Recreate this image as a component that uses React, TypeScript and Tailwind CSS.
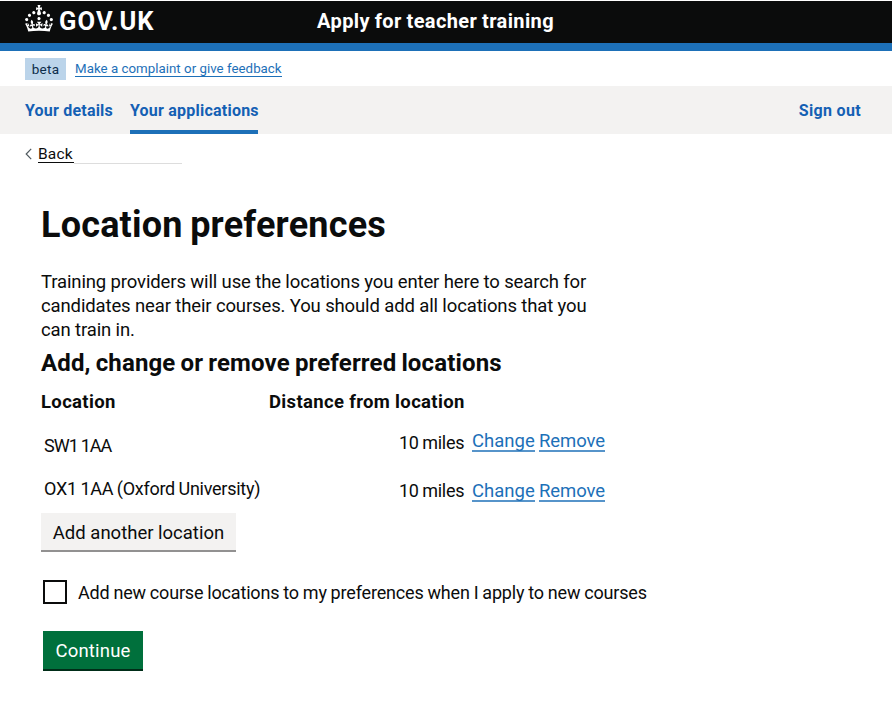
const crown =
  'M22.6 10.4c-1 .4-2-.1-2.4-1-.4-.9.1-2 1-2.4.9-.4 2 .1 2.4 1s-.1 2-1 2.4m-5.9 6.7c-.9.4-2-.1-2.4-1-.4-.9.1-2 1-2.4.9-.4 2 .1 2.4 1s-.1 2-1 2.4m10.8-3.7c-1 .4-2-.1-2.4-1-.4-.9.1-2 1-2.4.9-.4 2 .1 2.4 1s0 2-1 2.4m3.3 4.8c-1 .4-2-.1-2.4-1-.4-.9.1-2 1-2.4.9-.4 2 .1 2.4 1s-.1 2-1 2.4M17 4.7l2.3 1.2V2.5l-2.3.7-.2-.2.9-3h-3.4l.9 3-.2.2c-.1.1-2.3-.7-2.3-.7v3.4L15 4.7c.1.1.1.2.2.2l-1.3 4c-.1.2-.1.4-.1.6 0 1.1.8 2 1.9 2.2h.7c1-.2 1.9-1.1 1.9-2.1 0-.2 0-.4-.1-.6l-1.3-4c-.1-.2 0-.2.1-.3m-7.6 5.7c.9.4 2-.1 2.4-1 .4-.9-.1-2-1-2.4-.9-.4-2 .1-2.4 1s0 2 1 2.4m-5 3c.9.4 2-.1 2.4-1 .4-.9-.1-2-1-2.4-.9-.4-2 .1-2.4 1s.1 2 1 2.4m-3.2 4.8c.9.4 2-.1 2.4-1 .4-.9-.1-2-1-2.4-.9-.4-2 .1-2.4 1s0 2 1 2.4m14.8 11c4.4 0 8.6.3 12.3.8 1.1-4.5 2.4-7 3.7-8.8l-2.5-.9c.2 1.3.3 1.9 0 2.7-.4-.4-.8-1.1-1.1-2.3l-1.2 4c.7-.5 1.3-.8 2-.9-1.1 2.5-2.6 3.1-3.5 3-1.1-.2-1.7-1.2-1.5-2.1.3-1.2 1.5-1.5 2.1-.1 1.1-2.3-.8-3-2-2.3 1.9-1.9 2.1-3.5.6-5.6-2.1 1.6-2.1 3.2-1.2 5.5-1.2-1.4-3.2-.6-2.5 1.6.9-1.4 2.1-.5 1.9.8-.2 1.1-1.7 2.1-3.5 1.9-2.7-.2-2.9-2.1-2.9-3.6.7-.1 1.9.5 2.9 1.9l.4-4.3c-1.1 1.1-2.1 1.4-3.2 1.4.4-1.2 2.1-3 2.1-3h-5.4s1.7 1.9 2.1 3c-1.1 0-2.1-.2-3.2-1.4l.4 4.3c1-1.4 2.2-2 2.9-1.9-.1 1.5-.2 3.4-2.9 3.6-1.9.2-3.4-.8-3.5-1.9-.2-1.3 1-2.2 1.9-.8.7-2.3-1.2-3-2.5-1.6.9-2.2.9-3.9-1.2-5.5-1.5 2-1.3 3.7.6 5.6-1.2-.7-3.1 0-2 2.3.6-1.4 1.8-1.1 2.1.1.2.9-.3 1.9-1.5 2.1-.9.2-2.4-.5-3.5-3 .6 0 1.2.3 2 .9l-1.2-4c-.3 1.1-.7 1.9-1.1 2.3-.3-.8-.2-1.4 0-2.7l-2.9.9C1.3 23 2.6 25.5 3.7 30c3.7-.5 7.9-.8 12.3-.8';

function Header() {
  return (
    <header className="mt-px flex h-[50px] items-start border-b-8 border-[#1d70b8] bg-[#0b0c0c] pl-[25px] text-white">
      <svg viewBox="0 0 32 30" className="mt-[4px] h-[26.5px] w-[28px]" preserveAspectRatio="none" fill="currentColor">
        <path d={crown} />
      </svg>
      <span className="ml-[6px] mt-[5px] w-[258px] text-[25.5px] font-bold leading-[30px] tracking-[1.1px]">GOV.UK</span>
      <span className="mt-[6px] text-[20px] font-bold leading-[28px] tracking-[0.38px] [word-spacing:-0.5px]">Apply for teacher training</span>
    </header>
  );
}

function RowLinks() {
  return (
    <>
      <a className="ml-[8px] h-[24px] w-[63px] border-b-2 border-[#5694ca] text-[18.5px] leading-[26px]">Change</a>
      <a className="ml-[4px] h-[24px] w-[66px] border-b-2 border-[#5694ca] text-[18.5px] leading-[26px] tracking-[-0.1px]">Remove</a>
    </>
  );
}

export default function App() {
  return (
    <div className="h-[720px] overflow-hidden whitespace-nowrap bg-white font-['Roboto','Noto_Sans',sans-serif] text-[#0b0c0c]">
      <Header />
      <div className="flex h-[35px] pl-[25px] pt-[7px]">
        <strong className="h-[22px] w-[41px] bg-[#bbd4ea] text-center text-[13.5px] font-normal leading-[22px] tracking-[0.3px] text-[#0c2d4a]">beta</strong>
        <a className="ml-[9px] h-[19px] border-b border-[#1d70b8] text-[13.3px] leading-[22px] tracking-[0.02px] text-[#1d70b8]">Make a complaint or give feedback</a>
      </div>
      <nav className="flex h-[48px] bg-[#f3f2f1] pl-[25px] pr-[31px] text-[16px] font-bold leading-[50px] text-[#1460b4]">
        <a className="w-[105px] tracking-[0.2px]">Your details</a>
        <a className="h-[48px] w-[128px] border-b-4 border-[#1d70b8] tracking-[0.22px]">Your applications</a>
        <a className="ml-auto tracking-[0.33px]">Sign out</a>
      </nav>
      <div className="flex h-[46px] pl-[25px] pt-[9px]">
        <svg viewBox="0 0 7 12" className="mt-[5px] h-[12px] w-[7px]" fill="none" stroke="#505a5f" strokeWidth="1.2">
          <path d="M6.2 .8 1.2 6l5 5.2" />
        </svg>
        <a className="ml-[6px] h-[20px] w-[36px] border-b border-[#0b0c0c] text-[15.5px] leading-[22px] tracking-[0.2px]">Back</a>
        <div className="h-[21px] w-[108px] border-b border-[#dddddd]" />
      </div>
      <main className="pl-[41px]">
        <h1 className="pt-[23px] text-[36px] font-bold leading-[44px] tracking-[0.2px] [word-spacing:-1.6px]">Location preferences</h1>
        <p className="mt-[23px] text-[18.5px] leading-[24px] tracking-[-0.13px]">
          Training providers will use the locations you enter here to search for
          <br />
          candidates near their courses. You should add all locations that you
          <br />
          can train in.
        </p>
        <h2 className="mt-[6px] text-[24px] font-bold leading-[30px] tracking-[0.14px] [word-spacing:-1px]">Add, change or remove preferred locations</h2>
        <div className="mt-[12px] flex text-[18.5px] font-bold leading-[24px] tracking-[0.34px]">
          <span className="w-[228px]">Location</span>
          <span>Distance from location</span>
        </div>
        <div className="mt-[14px] flex h-[46px] text-[18px] leading-[24px]">
          <span className="ml-[3px] mt-[6px] w-[355px] tracking-[-1px] [word-spacing:-0.5px]">SW1 1AA</span>
          <span className="mt-[3px] w-[65px] tracking-[-0.3px] [word-spacing:-0.5px]">10 miles</span>
          <div className="flex text-[#1d70b8]"><RowLinks /></div>
        </div>
        <div className="flex h-[39px] text-[18px] leading-[24px]">
          <span className="ml-[3px] mt-[3px] w-[355px] tracking-[-0.27px] [word-spacing:-0.6px]">OX1 1AA (Oxford University)</span>
          <span className="mt-[5px] w-[65px] tracking-[-0.3px] [word-spacing:-0.5px]">10 miles</span>
          <div className="mt-[4px] flex text-[#1d70b8]"><RowLinks /></div>
        </div>
        <button className="block h-[39px] w-[195px] border-b-2 border-[#929191] bg-[#f3f2f1] text-[18.5px] leading-[40px]">Add another location</button>
        <label className="mt-[28px] flex h-[24px] pl-[2px]">
          <span className="h-[24px] w-[24px] border-2 border-[#0b0c0c]" />
          <span className="ml-[11px] text-[18px] leading-[25px] tracking-[-0.17px] [word-spacing:-0.4px]">Add new course locations to my preferences when I apply to new courses</span>
        </label>
        <button className="ml-[2px] mt-[27px] block h-[40px] w-[100px] border-b-2 border-[#002d18] bg-[#00703c] text-[18.5px] leading-[40px] tracking-[0.2px] text-white">Continue</button>
      </main>
    </div>
  );
}
